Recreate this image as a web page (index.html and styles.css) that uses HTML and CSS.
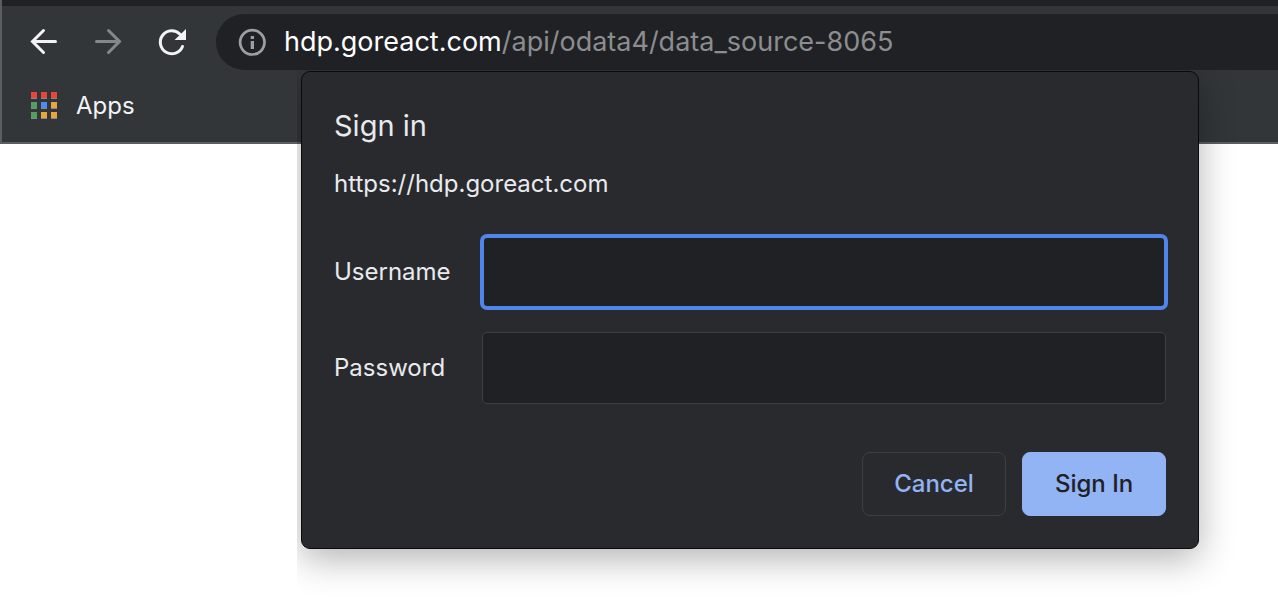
FILE: index.html
```html
<!DOCTYPE html>
<html lang="en">
<head>
    <meta charset="UTF-8">
    <meta name="viewport" content="width=device-width, initial-scale=1.0">
    <title>hdp.goreact.com</title>
    <link rel="stylesheet" href="styles.css">
</head>
<body>
    <header class="browser">
        <div class="tab-strip"></div>
        <div class="toolbar">
            <button type="button" class="nav-button" aria-label="Back">
                <svg width="32" height="32" viewBox="0 0 32 32" fill="none" stroke="#f1f3f4" stroke-width="3" stroke-linecap="round" stroke-linejoin="miter">
                    <path d="M27.500 15.500H5M15.500 4.500l-11 11 11 11"/>
                </svg>
            </button>
            <button type="button" class="nav-button" aria-label="Forward" disabled>
                <svg width="32" height="32" viewBox="0 0 32 32" fill="none" stroke="#85888b" stroke-width="3" stroke-linecap="round" stroke-linejoin="miter">
                    <path d="M4.500 15.500H27M16.500 4.500l11 11-11 11"/>
                </svg>
            </button>
            <button type="button" class="nav-button" aria-label="Reload">
                <svg width="32" height="32" viewBox="0 0 32 32" fill="none">
                    <path d="M26.500 20.500A11.500 11.500 0 1 1 24 8.200" stroke="#f1f3f4" stroke-width="3" stroke-linecap="round"/>
                    <path d="M30 3v11H18.500z" fill="#f1f3f4"/>
                </svg>
            </button>
            <div class="address-bar">
                <svg width="28" height="28" viewBox="0 0 28 28" fill="none">
                    <circle cx="14.300" cy="14.300" r="12.200" stroke="#9aa0a6" stroke-width="2.700"/>
                    <path d="M12.700 8h3.300v3h-3.300zM12.700 13h3.300v8h-3.300z" fill="#9aa0a6"/>
                </svg>
                <span class="url"><span class="host">hdp.goreact.com</span>/api/odata4/data_source-8065</span>
            </div>
        </div>
        <nav class="bookmarks">
            <a href="#" class="bookmark">
                <svg width="26" height="28" viewBox="0 0 26 28">
                    <path fill="#85888b" d="M0 6h6v1H0zM10 6h6v1h-6zM20 6h6v1h-6zM0 16h6v1H0zM10 16h6v1h-6zM20 16h6v1h-6zM0 26h6v1H0zM10 26h6v1h-6zM20 26h6v1h-6z"/>
                    <path fill="#e8453c" d="M0 0h6v6H0zM10 0h6v6h-6zM20 0h6v6h-6z"/>
                    <path fill="#549e61" d="M0 10h6v6H0zM0 20h6v6H0z"/>
                    <path fill="#4a8cf0" d="M10 10h6v6h-6z"/>
                    <path fill="#e8a538" d="M20 10h6v6h-6zM10 20h6v6h-6zM20 20h6v6h-6z"/>
                </svg>
                Apps
            </a>
        </nav>
    </header>

    <form class="dialog" role="dialog" aria-labelledby="dialog-title">
        <h1 id="dialog-title">Sign in</h1>
        <p class="origin">https://hdp.goreact.com</p>
        <div class="fields">
            <label for="username">Username</label>
            <input type="text" id="username" name="username" autofocus>
            <label for="password">Password</label>
            <input type="password" id="password" name="password">
        </div>
        <div class="actions">
            <button type="button" class="button">Cancel</button>
            <button type="submit" class="button primary">Sign In</button>
        </div>
    </form>
</body>
</html>
```
FILE: styles.css
```css
* {
    box-sizing: border-box;
}
body {
    margin: 0;
    background: #fff;
    color: #e8eaed;
    font-family: Inter, "Liberation Sans", sans-serif;
    font-size: 24px;
    line-height: 32px;
}
button {
    font: inherit;
}

/* Browser frame */
.browser {
    background: #323639;
    border-left: 2px solid #5b5e61;
    border-bottom: 2px solid #5b5e61;
}
.tab-strip {
    height: 6px;
    background: #202124;
}
.toolbar {
    display: flex;
    align-items: center;
    gap: 32px;
    padding: 8px 0 0 26px;
}
.nav-button {
    display: flex;
    padding: 0;
    border: 0;
    background: none;
}
.address-bar {
    flex: 1;
    display: flex;
    align-items: center;
    gap: 18px;
    height: 56px;
    margin-left: -4px;
    padding-left: 22px;
    background: #202124;
    border-radius: 28px 0 0 28px;
}
.url {
    color: #8c8d8f;
    font-size: 27px;
    white-space: nowrap;
}
.host {
    color: #fff;
}
.bookmarks {
    display: flex;
    align-items: center;
    height: 72px;
    padding-left: 29px;
}
.bookmark {
    display: flex;
    align-items: center;
    gap: 19px;
    color: #f1f3f4;
    text-decoration: none;
}

/* Sign-in popup, hangs over the toolbar and the page */
.dialog {
    position: absolute;
    top: 71px;
    left: 301px;
    right: 79px;
    padding: 32px;
    background: #292a2d;
    border: 1px solid #0a0a0b;
    border-radius: 9px;
    box-shadow: 0 10px 36px rgba(0, 0, 0, 0.3);
    clip-path: inset(-1px -60px -60px -4px);
}
.dialog h1 {
    margin: 0;
    font-size: 29px;
    font-weight: 400;
    line-height: 44px;
}
.origin {
    margin: 20px 0 36px;
}
.fields {
    display: grid;
    grid-template-columns: 116px 1fr;
    align-items: center;
    gap: 24px 32px;
}
.fields input {
    width: 100%;
    height: 72px;
    padding: 0 16px;
    background: #202124;
    border: 1px solid #3c4043;
    border-radius: 5px;
    color: inherit;
    caret-color: transparent;
    font: inherit;
}
.fields input:focus {
    border: 2px solid #5086ec;
    box-shadow: 0 0 0 2px #5086ec;
    outline: none;
}
.actions {
    display: flex;
    justify-content: flex-end;
    gap: 16px;
    margin-top: 48px;
}
.button {
    width: 144px;
    height: 64px;
    padding: 0;
    background: transparent;
    border: 1px solid #3c4043;
    border-radius: 8px;
    color: #92b3f4;
    font-weight: 500;
}
.button.primary {
    background: #92b3f4;
    border-color: #92b3f4;
    color: #202124;
}
```
